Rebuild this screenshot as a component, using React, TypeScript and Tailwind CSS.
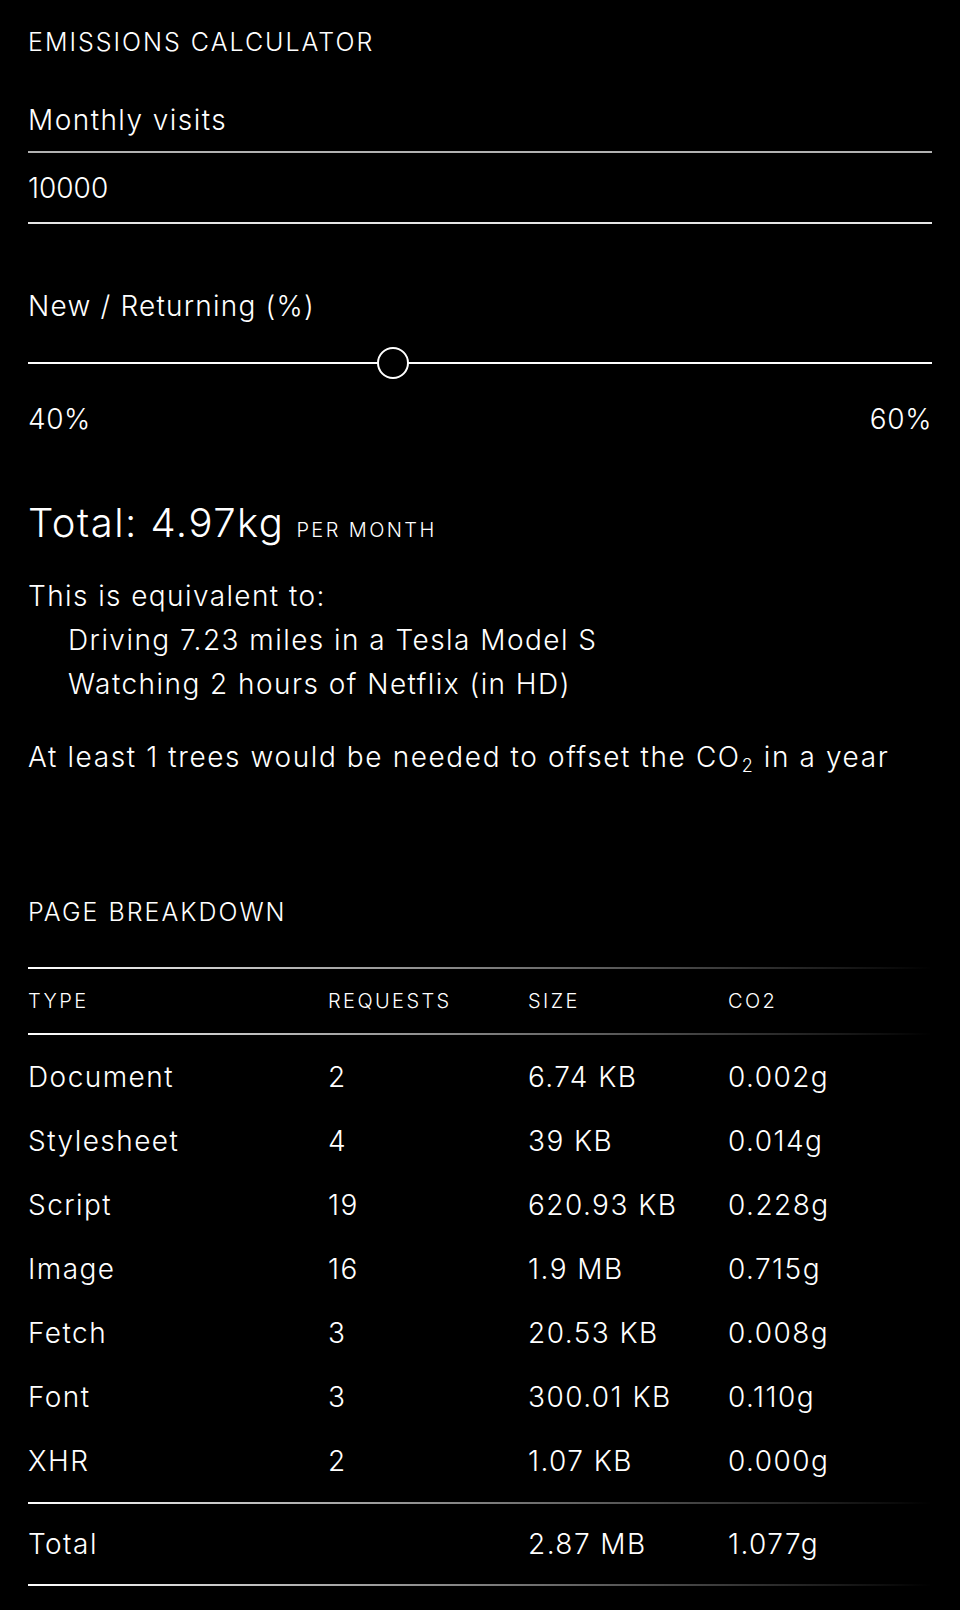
import React from "react";

interface Row {
    type: string;
    requests: string;
    size: string;
    co2: string;
}

const rows: Row[] = [
    { type: "Document", requests: "2", size: "6.74 KB", co2: "0.002g" },
    { type: "Stylesheet", requests: "4", size: "39 KB", co2: "0.014g" },
    { type: "Script", requests: "19", size: "620.93 KB", co2: "0.228g" },
    { type: "Image", requests: "16", size: "1.9 MB", co2: "0.715g" },
    { type: "Fetch", requests: "3", size: "20.53 KB", co2: "0.008g" },
    { type: "Font", requests: "3", size: "300.01 KB", co2: "0.110g" },
    { type: "XHR", requests: "2", size: "1.07 KB", co2: "0.000g" },
];

const ratio = 40;

const Fade = () => <div className="h-[2px] w-full bg-linear-to-r from-white to-transparent" />;

const cols = "grid grid-cols-[300px_200px_200px_1fr] items-center";

const App: React.FC = () => {
    return (
        <div className="bg-black min-h-screen text-white font-light font-['Inter','Noto_Sans',sans-serif] text-[28px] tracking-[1.45px]">
            <div className="px-[28px] pt-[27px] pb-[25px]">
                <h2 className="text-[25px] leading-[30px] tracking-[2px] uppercase">Emissions Calculator</h2>

                <label className="block mt-[43px] leading-[40px]">Monthly visits</label>
                <div className="mt-[11px] h-[73px] border-t-2 border-t-white/70 border-b-2 border-b-white/90 flex items-center tracking-normal">
                    10000
                </div>

                <div className="mt-[62px] leading-[40px] tracking-[1.2px]">New / Returning (%)</div>
                <div className="relative mt-[21px] h-[32px] flex items-center">
                    <div className="h-[2px] w-full bg-white" />
                    <div
                        className="absolute top-0 w-[32px] h-[32px] rounded-full border-2 border-white bg-black"
                        style={{ left: `calc(${ratio / 100} * (100% - 32px))` }}
                    />
                </div>
                <div className="mt-[20px] flex justify-between leading-[40px] tracking-[0.6px]">
                    <span>{ratio}%</span>
                    <span>{100 - ratio}%</span>
                </div>

                <div className="mt-[60px] flex items-baseline gap-[12px] leading-[48px]">
                    <span className="text-[40px] tracking-[1.5px]">Total: 4.97kg</span>
                    <span className="text-[20px] tracking-[2.4px] uppercase">per month</span>
                </div>

                <div className="mt-[20px] leading-[44px]">
                    <p className="tracking-[1.4px]">This is equivalent to:</p>
                    <p className="pl-[40px]">Driving 7.23 miles in a Tesla Model S</p>
                    <p className="pl-[40px]">Watching 2 hours of Netflix (in HD)</p>
                </div>

                <p className="mt-[29px] leading-[44px] tracking-[1.6px]">
                    At least 1 trees would be needed to offset the CO<sub className="text-[18px] ml-[1px]">2</sub> in a year
                </p>

                <h2 className="mt-[118px] text-[25px] leading-[30px] tracking-[2px] uppercase">Page Breakdown</h2>

                <div className="mt-[40px]">
                    <Fade />
                    <div className={`${cols} h-[64px] text-[20px] tracking-[2.4px] uppercase`}>
                        <span>Type</span>
                        <span>Requests</span>
                        <span>Size</span>
                        <span>CO2</span>
                    </div>
                    <Fade />
                    <div className="pt-[10px] pb-[9px]">
                        {rows.map((row) => (
                            <div key={row.type} className={`${cols} h-[64px]`}>
                                <span>{row.type}</span>
                                <span>{row.requests}</span>
                                <span>{row.size}</span>
                                <span>{row.co2}</span>
                            </div>
                        ))}
                    </div>
                    <Fade />
                    <div className={`${cols} h-[80px]`}>
                        <span>Total</span>
                        <span></span>
                        <span>2.87 MB</span>
                        <span>1.077g</span>
                    </div>
                    <Fade />
                </div>
            </div>
        </div>
    );
};

export default App;
